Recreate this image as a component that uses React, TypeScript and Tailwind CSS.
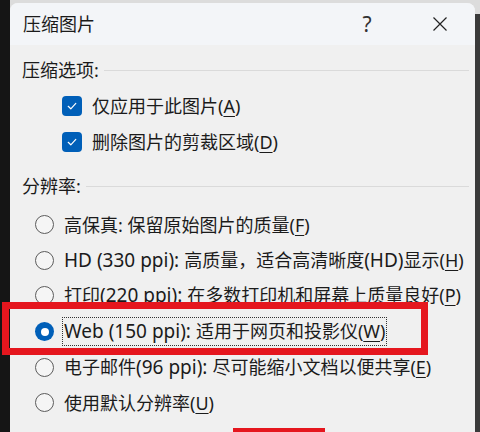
import React from "react";

function SectionHeader({ label }: { label: string }) {
  return (
    <div className="flex items-center h-[36px]">
      <span className="leading-none">{label}</span>
      <div className="flex-1 h-px bg-[#dadada] ml-[5px]" />
    </div>
  );
}

function Check({ children }: { children: React.ReactNode }) {
  return (
    <div className="flex items-center h-[36px] pl-[40px] gap-[10px]">
      <div className="w-[20px] h-[20px] rounded-[4px] bg-[#005fb8] flex items-center justify-center">
        <svg width="12" height="12" viewBox="0 0 12 12">
          <path d="M2.2 6.3 L4.8 8.8 L9.8 3.4" fill="none" stroke="#ffffff" strokeWidth="1.2" strokeLinecap="round" strokeLinejoin="round" />
        </svg>
      </div>
      <span className="leading-none">{children}</span>
    </div>
  );
}

function Radio({ children, selected }: { children: React.ReactNode; selected?: boolean }) {
  return (
    <div className="flex items-center h-[35.6px] pl-[13px] gap-[10px]">
      {selected ? (
        <div className="w-[19px] h-[19px] rounded-full bg-[#005fb8] flex items-center justify-center">
          <div className="w-[8px] h-[8px] rounded-full bg-white" />
        </div>
      ) : (
        <div className="w-[19px] h-[19px] rounded-full border-[1.5px] border-[#5c5c5c] bg-[#f5f5f5]" />
      )}
      {selected ? (
        <span className="leading-none h-[29px] flex items-center -ml-[2px] px-[1px] border border-dotted border-[#333]">
          <span>{children}</span>
        </span>
      ) : (
        <span className="leading-none">{children}</span>
      )}
    </div>
  );
}

function U({ children }: { children: React.ReactNode }) {
  return <span className="underline underline-offset-[3px] decoration-1">{children}</span>;
}

function L({ children }: { children: React.ReactNode }) {
  return <span className="text-[19px]">{children}</span>;
}

export default function App() {
  return (
    <div className="w-[480px] h-[432px] overflow-hidden relative flex bg-[#151515] text-[18px] text-[#1b1b1b] font-['Noto_Sans','Noto_Sans_CJK_SC',sans-serif]">
      <div className="w-[10px] bg-[#151515]" />
      <div className="flex-1 flex flex-col bg-[#dcdcdc]">
        <div className="h-[3px]" />
        <div className="flex-1 rounded-t-[8px] bg-[#f0f0f0] flex flex-col overflow-hidden">
          <div className="h-[42px] bg-[#f3f5f8] flex items-center pl-[13px]">
            <span className="leading-none flex-1">压缩图片</span>
            <span className="leading-none w-[20px] text-center text-[#333] text-[21px] mr-[55px]">?</span>
            <svg width="16" height="16" viewBox="0 0 16 16" className="mr-[27px]">
              <path d="M1.5 1.5 L14.5 14.5 M14.5 1.5 L1.5 14.5" stroke="#222" strokeWidth="1.2" />
            </svg>
          </div>
          <div className="flex flex-col pl-[12px] pr-[6px] pt-[7px]">
            <SectionHeader label="压缩选项:" />
            <Check>仅应用于此图片(<U>A</U>)</Check>
            <Check>删除图片的剪裁区域(<U>D</U>)</Check>
            <div className="mt-[8px]">
              <SectionHeader label="分辨率:" />
            </div>
            <div className="flex flex-col mt-[3px]">
              <Radio>高保真: 保留原始图片的质量(<U>F</U>)</Radio>
              <Radio><L>HD (330 ppi): </L>高质量，适合高清晰度<L>(HD)</L>显示(<U>H</U>)</Radio>
              <Radio>打印<L>(220 ppi): </L>在多数打印机和屏幕上质量良好(<U>P</U>)</Radio>
              <Radio selected><L>Web (150 ppi): </L>适用于网页和投影仪(<U>W</U>)</Radio>
              <Radio>电子邮件<L>(96 ppi): </L>尽可能缩小文档以便共享(<U>E</U>)</Radio>
              <Radio>使用默认分辨率(<U>U</U>)</Radio>
            </div>
          </div>
        </div>
      </div>
      <div className="w-[5px] flex flex-col">
        <div className="h-[14px] bg-[#dcdcdc]" />
        <div className="flex-1 bg-[#3a3a3a]" />
      </div>
      <div className="absolute left-[2px] top-[302px] w-[426px] h-[53px] border-[7px] border-[#e5161e]" />
      <div className="absolute left-[233px] top-[428px] w-[92px] h-[4px] bg-[#e5161e]" />
    </div>
  );
}
